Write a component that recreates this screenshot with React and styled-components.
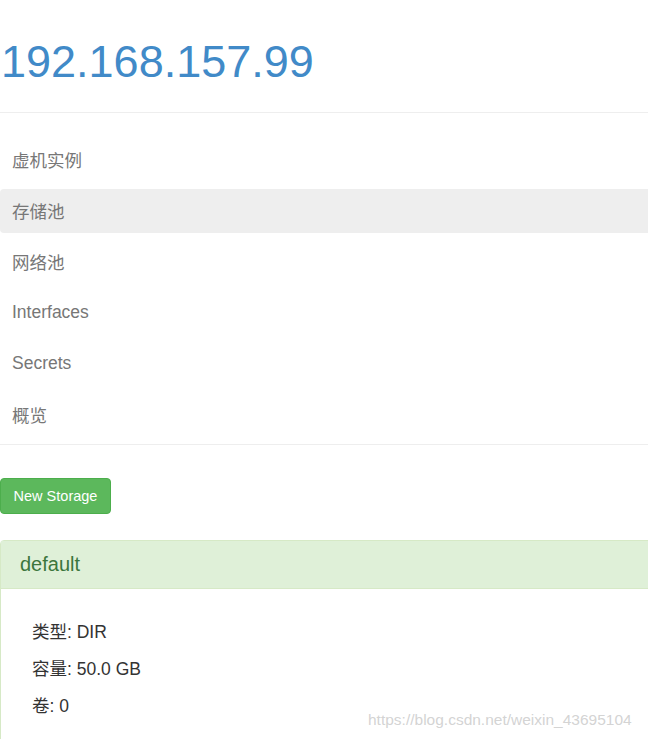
import React from "react";
import styled, { createGlobalStyle } from "styled-components";

const Global = createGlobalStyle`
  html, body { margin: 0; padding: 0; overflow: hidden; background: #fff; }
  body { font-family: "Liberation Sans", Arial, "Noto Sans CJK SC", sans-serif; }
  * { box-sizing: border-box; }
`;

const Page = styled.div`
  width: 660px;
  position: relative;
  min-height: 739px;
  padding-top: 37px;
`;

const Title = styled.h1`
  margin: 0 0 0 1px;
  font-size: 45px;
  line-height: 50px;
  font-weight: 400;
  color: #418ac8;
`;

const Rule = styled.hr`
  border: 0;
  border-top: 1px solid #eee;
  margin: ${(p) => p.$m};
`;

const Nav = styled.ul`
  list-style: none;
  margin: 25px 0 0;
  padding: 0;
  display: flex;
  flex-direction: column;
  gap: 7px;
`;

const NavItem = styled.li`
  height: 44px;
  display: flex;
  align-items: center;
  padding-left: 12px;
  padding-bottom: 1px;
  border-radius: 4px;
  font-size: 17.5px;
  color: #777;
  background: ${(p) => (p.$active ? "#eee" : "transparent")};
`;

const Button = styled.button`
  display: block;
  margin: 33px 0 0;
  width: 111px;
  height: 36px;
  padding: 0;
  background: #5cb85c;
  border: 1px solid #4cae4c;
  border-radius: 4px;
  color: #fff;
  font-family: "Liberation Sans", Arial, sans-serif;
  font-size: 14.5px;
`;

const Panel = styled.div`
  margin-top: 26px;
  border: 1px solid #d6e9c6;
  border-radius: 4px;
`;

const PanelHeading = styled.div`
  height: 48px;
  display: flex;
  align-items: center;
  padding-left: 19px;
  background: #dff0d8;
  border-bottom: 1px solid #d6e9c6;
  color: #3c763d;
  font-size: 20px;
`;

const PanelBody = styled.div`
  padding: 31px 31px 40px;
  display: flex;
  flex-direction: column;
  gap: 12px;
`;

const Line = styled.p`
  margin: 0;
  font-size: 17.5px;
  line-height: 25px;
  color: #333;
`;

const Watermark = styled.div`
  position: absolute;
  left: 368px;
  top: 711px;
  font-size: 15.5px;
  color: rgba(200, 200, 200, 0.8);
`;

const navItems = ["虚机实例", "存储池", "网络池", "Interfaces", "Secrets", "概览"];

export default function App() {
  return (
    <>
      <Global />
      <Page>
        <Title>192.168.157.99</Title>
        <Rule $m="25px 0 0" />
        <Nav>
          {navItems.map((n) => (
            <NavItem key={n} $active={n === "存储池"}>{n}</NavItem>
          ))}
        </Nav>
        <Rule $m="7px 0 0" />
        <Button>New Storage</Button>
        <Panel>
          <PanelHeading>default</PanelHeading>
          <PanelBody>
            <Line>类型: DIR</Line>
            <Line>容量: 50.0 GB</Line>
            <Line>卷: 0</Line>
          </PanelBody>
        </Panel>
        <Watermark>https://blog.csdn.net/weixin_43695104</Watermark>
      </Page>
    </>
  );
}
